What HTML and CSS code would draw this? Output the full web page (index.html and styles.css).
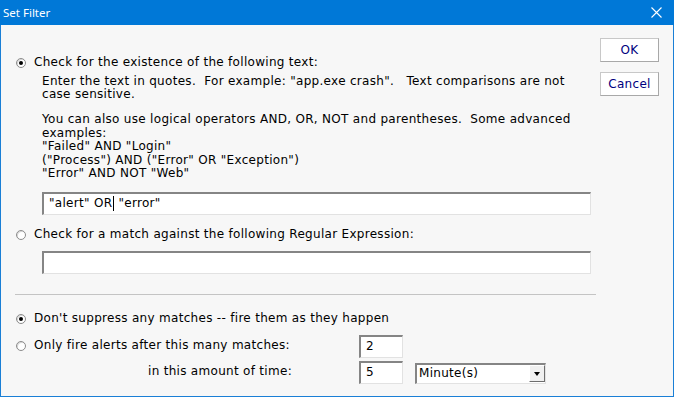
FILE: index.html
```html
<!DOCTYPE html>
<html>
<head>
    <meta charset="UTF-8">
    <meta name="viewport" content="width=device-width, initial-scale=1.0">
    <title>Set Filter</title>
    <link rel="stylesheet" href="styles.css">
</head>
<body>
    <div class="window">
        <div class="titlebar">
            <span class="titlebar__text">Set Filter</span>
            <svg class="titlebar__close" width="11" height="11" viewBox="0 0 11 11">
                <path d="M0.5 0.5 L10.5 10.5 M10.5 0.5 L0.5 10.5" stroke="#fff" stroke-width="1.1" fill="none"/>
            </svg>
        </div>
        <div class="client">
            <div class="main">
                <div class="option option--first"><span class="radio radio--on"></span>Check for the existence of the following text:</div>
                <div class="indent">
                    <p class="help help--first">Enter the text in quotes.&nbsp; For example: "app.exe crash".&nbsp;&nbsp; Text comparisons are not<br>case sensitive.</p>
                    <p class="help help--second">You can also use logical operators AND, OR, NOT and parentheses.&nbsp; Some advanced<br>examples:<br>"Failed" AND "Login"<br>("Process") AND ("Error" OR "Exception")<br>"Error" AND NOT "Web"</p>
                    <div class="field field--text">"alert" OR<span class="caret"></span> "error"</div>
                </div>
                <div class="option option--regex"><span class="radio"></span>Check for a match against the following Regular Expression:</div>
                <div class="indent">
                    <div class="field field--regex"></div>
                </div>
                <div class="separator"></div>
                <div class="option option--suppress"><span class="radio radio--on"></span>Don't suppress any matches -- fire them as they happen</div>
                <div class="timing">
                    <div class="option"><span class="radio"></span>Only fire alerts after this many matches:</div>
                    <div class="field field--num">2</div>
                    <div></div>
                    <div class="timing__label">in this amount of time:</div>
                    <div class="field field--num">5</div>
                    <div class="combo">
                        <span class="combo__text">Minute(s)</span>
                        <span class="combo__btn"><span class="combo__arrow"></span></span>
                    </div>
                </div>
            </div>
            <div class="side">
                <button class="btn">OK</button>
                <button class="btn">Cancel</button>
            </div>
        </div>
    </div>
</body>
</html>
```

FILE: styles.css
```css
*, *::before, *::after {
    box-sizing: border-box;
}
body {
    margin: 0;
    font-family: 'DejaVu Sans', Verdana, sans-serif;
    font-size: 12px;
    letter-spacing: 0.3px;
    color: #000;
}
.window {
    width: 674px;
    height: 397px;
    border: 1px solid #1a7fd6;
    border-top: none;
    background-color: #f7f7f7;
}
.titlebar {
    height: 25px;
    background-color: #0078d7;
    display: flex;
    align-items: center;
    padding: 0 0 0 3px;
    margin: 0 -1px;
}
.titlebar__text {
    color: #fff;
    font-family: 'Noto Sans', sans-serif;
    font-size: 11.5px;
    letter-spacing: 0;
}
.titlebar__close {
    margin-left: auto;
    margin-right: 12px;
}
.client {
    display: flex;
    height: 371px;
}
.main {
    width: 596px;
    padding-left: 15px;
    line-height: 13.5px;
}
.option {
    display: flex;
    align-items: center;
    height: 14px;
    white-space: nowrap;
}
.option--first {
    margin-top: 31px;
}
.option--regex {
    margin-top: 13.5px;
}
.option--suppress {
    margin-top: 17px;
}
.radio {
    flex: none;
    width: 10px;
    height: 10px;
    margin-right: 8px;
    border-radius: 50%;
    border: 1px solid #8c8c8c;
    background-color: #fff;
    box-shadow: inset 1px 1px 0 #d8d8d8;
    display: flex;
    align-items: center;
    justify-content: center;
}
.radio--on::after {
    content: "";
    width: 4px;
    height: 4px;
    border-radius: 50%;
    background-color: #000;
}
.indent {
    margin-left: 26px;
}
.help {
    margin: 0;
    white-space: nowrap;
}
.help--first {
    margin-top: 4.5px;
}
.help--second {
    margin-top: 11.5px;
}
.field {
    background-color: #fff;
    border-top: 2px solid #858585;
    border-left: 2px solid #858585;
    border-right: 1px solid #e2e2e2;
    border-bottom: 1px solid #e2e2e2;
    height: 23px;
    line-height: 19px;
    padding-left: 5px;
    white-space: nowrap;
}
.field--text {
    width: 549px;
    margin-top: 11px;
}
.field--regex {
    width: 549px;
    margin-top: 9px;
}
.caret {
    display: inline-block;
    width: 1px;
    height: 15px;
    background-color: #000;
    vertical-align: -4px;
    margin-left: 1px;
}
.separator {
    margin: 20px 0 0 -1px;
    width: 581px;
    height: 1px;
    background-color: #c4c4c4;
}
.timing {
    display: grid;
    grid-template-columns: 331px 44px 131px;
    grid-auto-rows: 23px;
    column-gap: 12px;
    row-gap: 3px;
    margin-top: 8.5px;
    align-items: center;
}
.timing__label {
    margin-left: 132px;
    white-space: nowrap;
}
.field--num {
    width: 44px;
}
.combo {
    align-self: end;
    height: 21px;
    display: flex;
    align-items: center;
    background-color: #fff;
    border-top: 2px solid #858585;
    border-left: 2px solid #858585;
    border-right: 1px solid #e2e2e2;
    border-bottom: 1px solid #e2e2e2;
}
.combo__text {
    padding-left: 2px;
}
.combo__btn {
    margin-left: auto;
    width: 16px;
    height: 17px;
    background-color: #f0f0f0;
    border-top: 1px solid #fff;
    border-left: 1px solid #fff;
    border-right: 1px solid #6e6e6e;
    border-bottom: 1px solid #6e6e6e;
    display: flex;
    align-items: center;
    justify-content: center;
}
.combo__arrow {
    width: 0;
    height: 0;
    border-left: 3.5px solid transparent;
    border-right: 3.5px solid transparent;
    border-top: 4px solid #000;
}
.side {
    margin-left: auto;
    margin-right: 14px;
    padding-top: 13px;
    display: flex;
    flex-direction: column;
    gap: 10px;
}
.btn {
    width: 59px;
    height: 24px;
    padding: 0;
    background-color: #fff;
    border: 1px solid #c8c8c8;
    border-right-color: #a8a8a8;
    border-bottom-color: #a8a8a8;
    color: #000080;
    font-family: 'DejaVu Sans', Verdana, sans-serif;
    font-size: 12px;
    letter-spacing: 0.3px;
}
```
